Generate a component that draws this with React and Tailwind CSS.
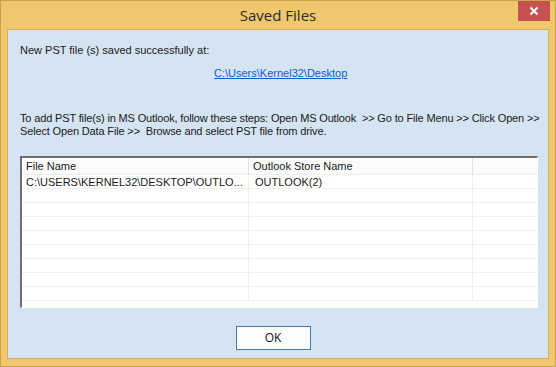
export default function App() {
  const rows = [
    ["C:\\USERS\\KERNEL32\\DESKTOP\\OUTLO...", "OUTLOOK(2)"],
    ["", ""],
    ["", ""],
    ["", ""],
    ["", ""],
    ["", ""],
    ["", ""],
    ["", ""],
    ["", ""],
  ];

  return (
    <div className="w-[556px] h-[367px] bg-[#f0c76d] border border-[#caa34f] relative overflow-hidden font-['Liberation_Sans',Arial,sans-serif]">
      {/* title bar */}
      <div className="h-[28px] flex items-center justify-center">
        <span className="text-[15px] text-[#2b2b2b] font-['Open_Sans',sans-serif] leading-none">
          Saved Files
        </span>
      </div>
      <button className="absolute left-[517px] top-0 w-[32px] h-[20px] bg-[#c75050] flex items-center justify-center">
        <svg width="10" height="10" viewBox="0 0 10 10">
          <path d="M1.5 1.5 L8.5 8.5 M8.5 1.5 L1.5 8.5" stroke="#fff" strokeWidth="2" />
        </svg>
      </button>

      {/* client area */}
      <div className="ml-[6px] w-[542px] h-[330px] border border-[#cfae5e] bg-[#d5e4f2] text-[11px] text-[#1a1a1a] flex flex-col">
        <p className="ml-[12px] mt-[14px] leading-[13px]">New PST file (s) saved successfully at:</p>
        <a className="ml-[206px] mt-[10px] leading-[13px] text-[#0a5fcf] underline w-fit">
          C:\Users\Kernel32\Desktop
        </a>
        <p className="ml-[12px] mt-[32px] leading-[13px] whitespace-nowrap tracking-[-0.15px]">
          To add PST file(s) in MS Outlook, follow these steps: Open MS Outlook &nbsp;&gt;&gt; Go to File Menu &gt;&gt; Click Open &gt;&gt;
          <br />
          Select Open Data File &gt;&gt; &nbsp;Browse and select PST file from drive.
        </p>

        {/* list view */}
        <div className="ml-[12px] mt-[18px] w-[518px] h-[152px] border-t-2 border-l-2 border-t-[#6e6e6e] border-l-[#6e6e6e] border-r border-b border-r-white border-b-white bg-white overflow-hidden">
          <div className="flex h-[17px] bg-[#fcfcfc] border-b border-[#ececec]">
            <div className="w-[227px] border-r border-[#e3e3e3] pl-[4px] leading-[17px]">File Name</div>
            <div className="w-[224px] border-r border-[#e3e3e3] pl-[4px] leading-[17px]">Outlook Store Name</div>
            <div className="flex-1" />
          </div>
          {rows.map((r, i) => (
            <div key={i} className="flex h-[14px] border-b border-[#efefef]">
              <div className="w-[227px] border-r border-[#efefef] pl-[4px] leading-[14px] whitespace-nowrap">{r[0]}</div>
              <div className="w-[224px] border-r border-[#efefef] pl-[6px] leading-[14px]">{r[1]}</div>
              <div className="flex-1" />
            </div>
          ))}
        </div>

        <div className="flex justify-center mt-[18px]">
          <button className="ml-[-10px] w-[75px] h-[24px] border border-[#3f7eb5] bg-[#fdfdfd] text-[12px] text-[#111] font-['Open_Sans',sans-serif]">
            OK
          </button>
        </div>
      </div>
    </div>
  );
}
